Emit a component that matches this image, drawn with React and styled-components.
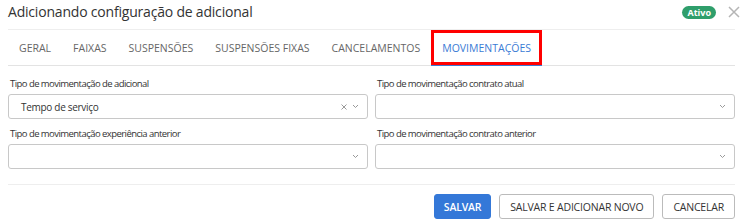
import React from "react";
import styled, { createGlobalStyle } from "styled-components";

const GlobalStyle = createGlobalStyle`
  html, body {
    margin: 0;
    padding: 0;
    background: #fff;
  }
  body {
    font-family: "Open Sans", "Noto Sans", Arial, sans-serif;
    color: #333;
  }
`;

const Modal = styled.div`
  width: 743px;
  height: 221px;
  box-sizing: border-box;
  padding: 0 8px;
  display: flex;
  flex-direction: column;
  background: #fff;
`;

const Header = styled.div`
  display: flex;
  align-items: center;
  justify-content: space-between;
  height: 30px;
  border-bottom: 1px solid #eee;
  box-sizing: border-box;
`;

const Title = styled.h1`
  margin: 0;
  margin-top: -6px;
  font-size: 14px;
  font-weight: 400;
  letter-spacing: -0.2px;
  color: #333;
  line-height: 20px;
`;

const HeaderRight = styled.div`
  display: flex;
  align-items: center;
  gap: 12px;
  margin-top: -5px;
  margin-right: -5px;
`;

const Badge = styled.span`
  background: #2f9e6b;
  color: #fff;
  font-size: 9px;
  font-weight: 700;
  border-radius: 7px;
  padding: 0 5px;
  line-height: 13px;
  height: 13px;
`;

const CloseButton = styled.button`
  border: none;
  background: none;
  padding: 0;
  width: 12px;
  height: 12px;
  display: flex;
  align-items: center;
  justify-content: center;
  cursor: pointer;
`;

const Tabs = styled.div`
  display: flex;
  height: 36px;
  border-bottom: 1px solid #e3e3e3;
  box-sizing: border-box;
`;

const Tab = styled.div`
  position: relative;
  display: flex;
  align-items: center;
  padding: 0 11px;
  font-size: 10.5px;
  color: ${(p) => (p.$active ? "#3a7bd5" : "#666")};
  border-bottom: ${(p) => (p.$active ? "1px solid #3a7bd5" : "none")};
  margin-bottom: -1px;
  white-space: nowrap;
`;

const Highlight = styled.span`
  position: absolute;
  inset: 0;
  border: 3px solid #f00;
  pointer-events: none;
`;

const Form = styled.div`
  display: grid;
  grid-template-columns: 1fr 1fr;
  column-gap: 7px;
  row-gap: 8px;
  padding-top: 11px;
  padding-bottom: 15px;
  border-bottom: 1px solid #eee;
`;

const Field = styled.div`
  display: flex;
  flex-direction: column;
  gap: 3px;
`;

const Label = styled.label`
  font-size: 9.5px;
  letter-spacing: -0.55px;
  color: #333;
  line-height: 14px;
  padding-left: 2px;
`;

const SelectBox = styled.div`
  height: 25px;
  box-sizing: border-box;
  border: 1px solid #c8c8c8;
  border-radius: 3px;
  display: flex;
  align-items: center;
  padding: 0 8px 0 12px;
  font-size: 10px;
  letter-spacing: -0.3px;
  color: #333;
`;

const Value = styled.span`
  flex: 1;
`;

const Icons = styled.span`
  display: flex;
  align-items: center;
  gap: 5px;
`;

const Footer = styled.div`
  display: flex;
  justify-content: flex-end;
  gap: 8px;
  padding-top: 9px;
`;

const Button = styled.button`
  height: 25px;
  box-sizing: border-box;
  border-radius: 3px;
  font-family: inherit;
  font-size: 10.5px;
  letter-spacing: -0.2px;
  padding: 0 ${(p) => (p.$primary ? "9px" : "10px")};
  border: 1px solid ${(p) => (p.$primary ? "#3478d8" : "#bbb")};
  background: ${(p) => (p.$primary ? "#3478d8" : "#fff")};
  color: ${(p) => (p.$primary ? "#fff" : "#333")};
  font-weight: ${(p) => (p.$primary ? 600 : 400)};
  cursor: pointer;
`;

const Chevron = () => (
  <svg width="7" height="5" viewBox="0 0 7 5">
    <path d="M1 1l2.5 2.5L6 1" fill="none" stroke="#999" strokeWidth="1" />
  </svg>
);

const ClearX = () => (
  <svg width="6" height="6" viewBox="0 0 6 6">
    <path d="M0.5 0.5l5 5M5.5 0.5l-5 5" fill="none" stroke="#999" strokeWidth="1" />
  </svg>
);

const tabs = [
  "GERAL",
  "FAIXAS",
  "SUSPENSÕES",
  "SUSPENSÕES FIXAS",
  "CANCELAMENTOS",
  "MOVIMENTAÇÕES",
];

const fields = [
  { label: "Tipo de movimentação de adicional", value: "Tempo de serviço" },
  { label: "Tipo de movimentação contrato atual" },
  { label: "Tipo de movimentação experiência anterior" },
  { label: "Tipo de movimentação contrato anterior" },
];

export default function App() {
  return (
    <>
      <GlobalStyle />
      <Modal>
        <Header>
          <Title>Adicionando configuração de adicional</Title>
          <HeaderRight>
            <Badge>Ativo</Badge>
            <CloseButton aria-label="Fechar">
              <svg width="12" height="12" viewBox="0 0 12 12">
                <path d="M1 1l10 10M11 1L1 11" stroke="#b5b5b5" strokeWidth="1.5" />
              </svg>
            </CloseButton>
          </HeaderRight>
        </Header>
        <Tabs>
          {tabs.map((t, i) => (
            <Tab key={t} $active={i === tabs.length - 1}>
              {t}
              {i === tabs.length - 1 && <Highlight />}
            </Tab>
          ))}
        </Tabs>
        <Form>
          {fields.map((f) => (
            <Field key={f.label}>
              <Label>{f.label}</Label>
              <SelectBox>
                <Value>{f.value}</Value>
                <Icons>
                  {f.value && <ClearX />}
                  <Chevron />
                </Icons>
              </SelectBox>
            </Field>
          ))}
        </Form>
        <Footer>
          <Button $primary>SALVAR</Button>
          <Button>SALVAR E ADICIONAR NOVO</Button>
          <Button>CANCELAR</Button>
        </Footer>
      </Modal>
    </>
  );
}
